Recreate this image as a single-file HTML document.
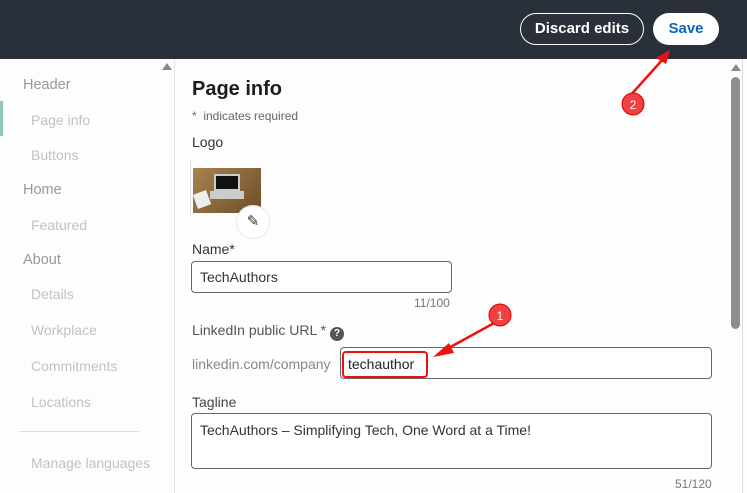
<!DOCTYPE html>
<html><head><style>
*{margin:0;padding:0;box-sizing:border-box}
body{width:747px;height:493px;overflow:hidden;background:#fdfdfd;font-family:"Liberation Sans",sans-serif;position:relative;color:#222}
.top{position:absolute;left:0;top:0;width:747px;height:59px;background:#29303a}
.btn{position:absolute;top:13px;height:32px;border-radius:16px;font-weight:bold;font-size:15px;line-height:30px;text-align:center}
.side{position:absolute;left:0;top:59px;width:175px;height:434px;border-right:1px solid #e4e4e4;background:#fdfdfd}
.s{position:absolute;font-size:14px;color:#a8a8a8}
.s.h{left:23px;color:#999;font-size:14.5px}
.s.i{left:31px;color:#c2c2c2}
.a{position:absolute;font-size:14px;color:#333}
.box{position:absolute;border:1px solid #666;border-radius:4px;background:#fff}
.cnt{position:absolute;font-size:12px;color:#777}
</style></head><body>
<div class="top">
<div class="btn" style="left:520px;width:124px;border:1px solid #fff;color:#fff">Discard edits</div>
<div class="btn" style="left:653px;width:66px;background:#fff;color:#0a66c2;line-height:32px">Save</div>
</div>
<div class="side">
<div style="position:absolute;left:162px;top:4px;width:0;height:0;border-left:5px solid transparent;border-right:5px solid transparent;border-bottom:7px solid #888"></div>
<div style="position:absolute;left:0;top:42px;width:3px;height:35px;background:#8ccab4"></div>
<div class="s h" style="top:18px">Header</div>
<div class="s i" style="top:53px">Page info</div>
<div class="s i" style="top:88px">Buttons</div>
<div class="s h" style="top:123px">Home</div>
<div class="s i" style="top:158px">Featured</div>
<div class="s h" style="top:193px">About</div>
<div class="s i" style="top:227px">Details</div>
<div class="s i" style="top:263px">Workplace</div>
<div class="s i" style="top:299px">Commitments</div>
<div class="s i" style="top:335px">Locations</div>
<div style="position:absolute;left:19px;top:372px;width:120px;border-top:1px solid #ddd"></div>
<div class="s i" style="top:396px">Manage languages</div>
</div>
<div class="a" style="left:192px;top:78px;font-size:20px;font-weight:bold;color:#1d1d1d">Page info</div>
<div class="a" style="left:192px;top:109px;font-size:12px;color:#666">*&nbsp; indicates required</div>
<div class="a" style="left:192px;top:134px">Logo</div>
<div style="position:absolute;left:190px;top:160px;width:1px;height:55px;background:#ddd"></div>
<div style="position:absolute;left:193px;top:168px;width:68px;height:45px;background:linear-gradient(135deg,#a8834f,#6e4e2a)">
<div style="position:absolute;left:21px;top:6px;width:26px;height:17px;background:#111;border:2px solid #ccc"></div>
<div style="position:absolute;left:17px;top:23px;width:34px;height:8px;background:#ccc"></div>
<div style="position:absolute;left:2px;top:24px;width:14px;height:15px;background:#eee;transform:rotate(-20deg)"></div>
</div>
<div style="position:absolute;left:236px;top:205px;width:34px;height:34px;border-radius:50%;background:#fff;border:1px solid #e6e6e6;text-align:center;line-height:32px;font-size:15px;color:#333">✎</div>
<div class="a" style="left:192px;top:241px">Name*</div>
<div class="box" style="left:191px;top:261px;width:261px;height:32px"><span style="position:absolute;left:8px;top:7px;font-size:14px;color:#333">TechAuthors</span></div>
<div class="cnt" style="left:414px;top:296px">11/100</div>
<div class="a" style="left:192px;top:322px;color:#555">LinkedIn public URL <span style="color:#0a66c2">*</span> <span style="display:inline-block;width:14px;height:14px;border-radius:50%;background:#555;color:#fff;font-size:10px;font-weight:bold;text-align:center;line-height:14px;vertical-align:-1px">?</span></div>
<div class="a" style="left:192px;top:356px;color:#888">linkedin.com/company</div>
<div class="box" style="left:340px;top:347px;width:372px;height:32px"></div>
<div style="position:absolute;left:342px;top:351px;width:86px;height:27px;border:2px solid #e11;border-radius:4px"></div>
<div class="a" style="left:348px;top:356px;color:#222">techauthor</div>
<div class="a" style="left:192px;top:394px;color:#444">Tagline</div>
<div class="box" style="left:191px;top:413px;width:521px;height:56px"><span style="position:absolute;left:8px;top:8px;font-size:14px;color:#333">TechAuthors – Simplifying Tech, One Word at a Time!</span></div>
<div class="cnt" style="left:675px;top:477px">51/120</div>
<div style="position:absolute;left:731px;top:64px;width:0;height:0;border-left:5px solid transparent;border-right:5px solid transparent;border-bottom:7px solid #888"></div>
<div style="position:absolute;left:731px;top:77px;width:9px;height:252px;border-radius:5px;background:#8e8e8e"></div>
<div style="position:absolute;left:742px;top:59px;width:1px;height:434px;background:#ddd"></div>
<svg style="position:absolute;left:0;top:0" width="747" height="493">
<line x1="628" y1="98" x2="664" y2="58" stroke="#f01010" stroke-width="2.5"/>
<polygon points="670,50 656,58 666,64" fill="#f01010"/>
<circle cx="633" cy="104" r="11" fill="#f04040" stroke="#d00" />
<text x="633" y="109" fill="#fff" font-size="12" text-anchor="middle" font-family="Liberation Sans">2</text>
<line x1="496" y1="322" x2="445" y2="350" stroke="#f01010" stroke-width="2.5"/>
<polygon points="433,357 449,343 454,353" fill="#f01010"/>
<circle cx="500" cy="315" r="11" fill="#f04040" stroke="#d00"/>
<text x="500" y="320" fill="#fff" font-size="12" text-anchor="middle" font-family="Liberation Sans">1</text>
</svg>
</body></html>
